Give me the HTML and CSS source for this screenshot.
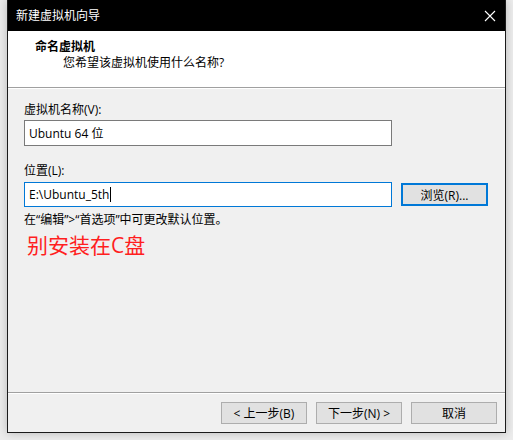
FILE: index.html
```html
<!DOCTYPE html>
<html>

<head>
    <meta charset="utf-8">
    <title>新建虚拟机向导</title>
    <link rel="stylesheet" href="styles.css">
</head>

<body>
    <div class="window">
        <div class="titlebar">
            <span class="title">新建虚拟机向导</span>
            <svg class="close" width="12" height="12" viewBox="0 0 12 12">
                <path d="M1 1 L11 11 M11 1 L1 11" stroke="#ffffff" stroke-width="1.1" fill="none" />
            </svg>
        </div>

        <div class="header">
            <div class="header-title">命名虚拟机</div>
            <div class="header-sub">您希望该虚拟机使用什么名称?</div>
        </div>

        <div class="separator"></div>

        <div class="content">
            <div class="label">虚拟机名称(V):</div>
            <div class="textbox name-box">Ubuntu 64 位</div>

            <div class="label label-2">位置(L):</div>
            <div class="row">
                <div class="textbox focused">E:\Ubuntu_5th<span class="caret"></span></div>
                <button class="btn btn-default">浏览(R)...</button>
            </div>

            <div class="hint">在“编辑”&gt;“首选项”中可更改默认位置。</div>
            <div class="note">别安装在C盘</div>
        </div>

        <div class="separator"></div>

        <div class="footer">
            <button class="btn">&lt; 上一步(B)</button>
            <button class="btn">下一步(N) &gt;</button>
            <button class="btn">取消</button>
        </div>
    </div>
</body>

</html>
```

FILE: styles.css
```css
* {
    box-sizing: border-box;
}

body {
    margin: 0;
    height: 440px;
    background-color: #ececec;
    font-family: "Open Sans", "Noto Sans CJK SC", sans-serif;
    font-size: 12px;
    color: #000000;
    overflow: hidden;
}

.window {
    display: flex;
    flex-direction: column;
    margin-left: 7px;
    width: 499px;
    height: 433px;
    border: 1px solid #1b1b1b;
    border-top: none;
    background-color: #f0f0f0;
    box-shadow: 0px 0px 9px rgba(0, 0, 0, 0.22);
}

.titlebar {
    display: flex;
    align-items: center;
    justify-content: space-between;
    height: 31px;
    padding-left: 8px;
    padding-right: 9px;
    background-color: #000000;
    color: #ffffff;
}

.title {
    line-height: 16px;
}

.header {
    height: 56px;
    padding-top: 8px;
    background-color: #ffffff;
}

.header-title {
    padding-left: 27px;
    font-weight: bold;
    line-height: 16px;
}

.header-sub {
    padding-left: 55px;
    line-height: 16px;
}

.separator {
    height: 2px;
    border-top: 1px solid #a0a0a0;
    border-bottom: 1px solid #ffffff;
}

.content {
    flex: 1;
    padding-top: 13px;
    padding-left: 16px;
}

.label {
    line-height: 16px;
}

.label-2 {
    margin-top: 17px;
}

.textbox {
    display: flex;
    align-items: center;
    width: 368px;
    height: 26px;
    margin-top: 2px;
    padding-left: 4px;
    background-color: #ffffff;
    border: 1px solid #7a7a7a;
}

.row {
    display: flex;
    align-items: center;
    gap: 9px;
    margin-top: 3px;
}

.row .textbox {
    height: 25px;
    margin-top: 0;
}

.focused {
    border-color: #0078d7;
}

.caret {
    display: inline-block;
    width: 1px;
    height: 15px;
    margin-left: 1px;
    background-color: #000000;
}

.btn {
    width: 86px;
    height: 22px;
    padding: 0;
    font-family: "Open Sans", "Noto Sans CJK SC", sans-serif;
    font-size: 12px;
    color: #000000;
    background-color: #e1e1e1;
    border: 1px solid #adadad;
}

.btn-default {
    width: 87px;
    height: 23px;
    border: 2px solid #0078d7;
}

.hint {
    margin-top: 5px;
    line-height: 16px;
}

.note {
    margin-top: 5px;
    padding-left: 3px;
    font-size: 21px;
    line-height: 25px;
    color: #ff1f1f;
}

.footer {
    display: flex;
    justify-content: flex-end;
    gap: 9px;
    height: 38px;
    padding-top: 8px;
    padding-right: 8px;
}
```
